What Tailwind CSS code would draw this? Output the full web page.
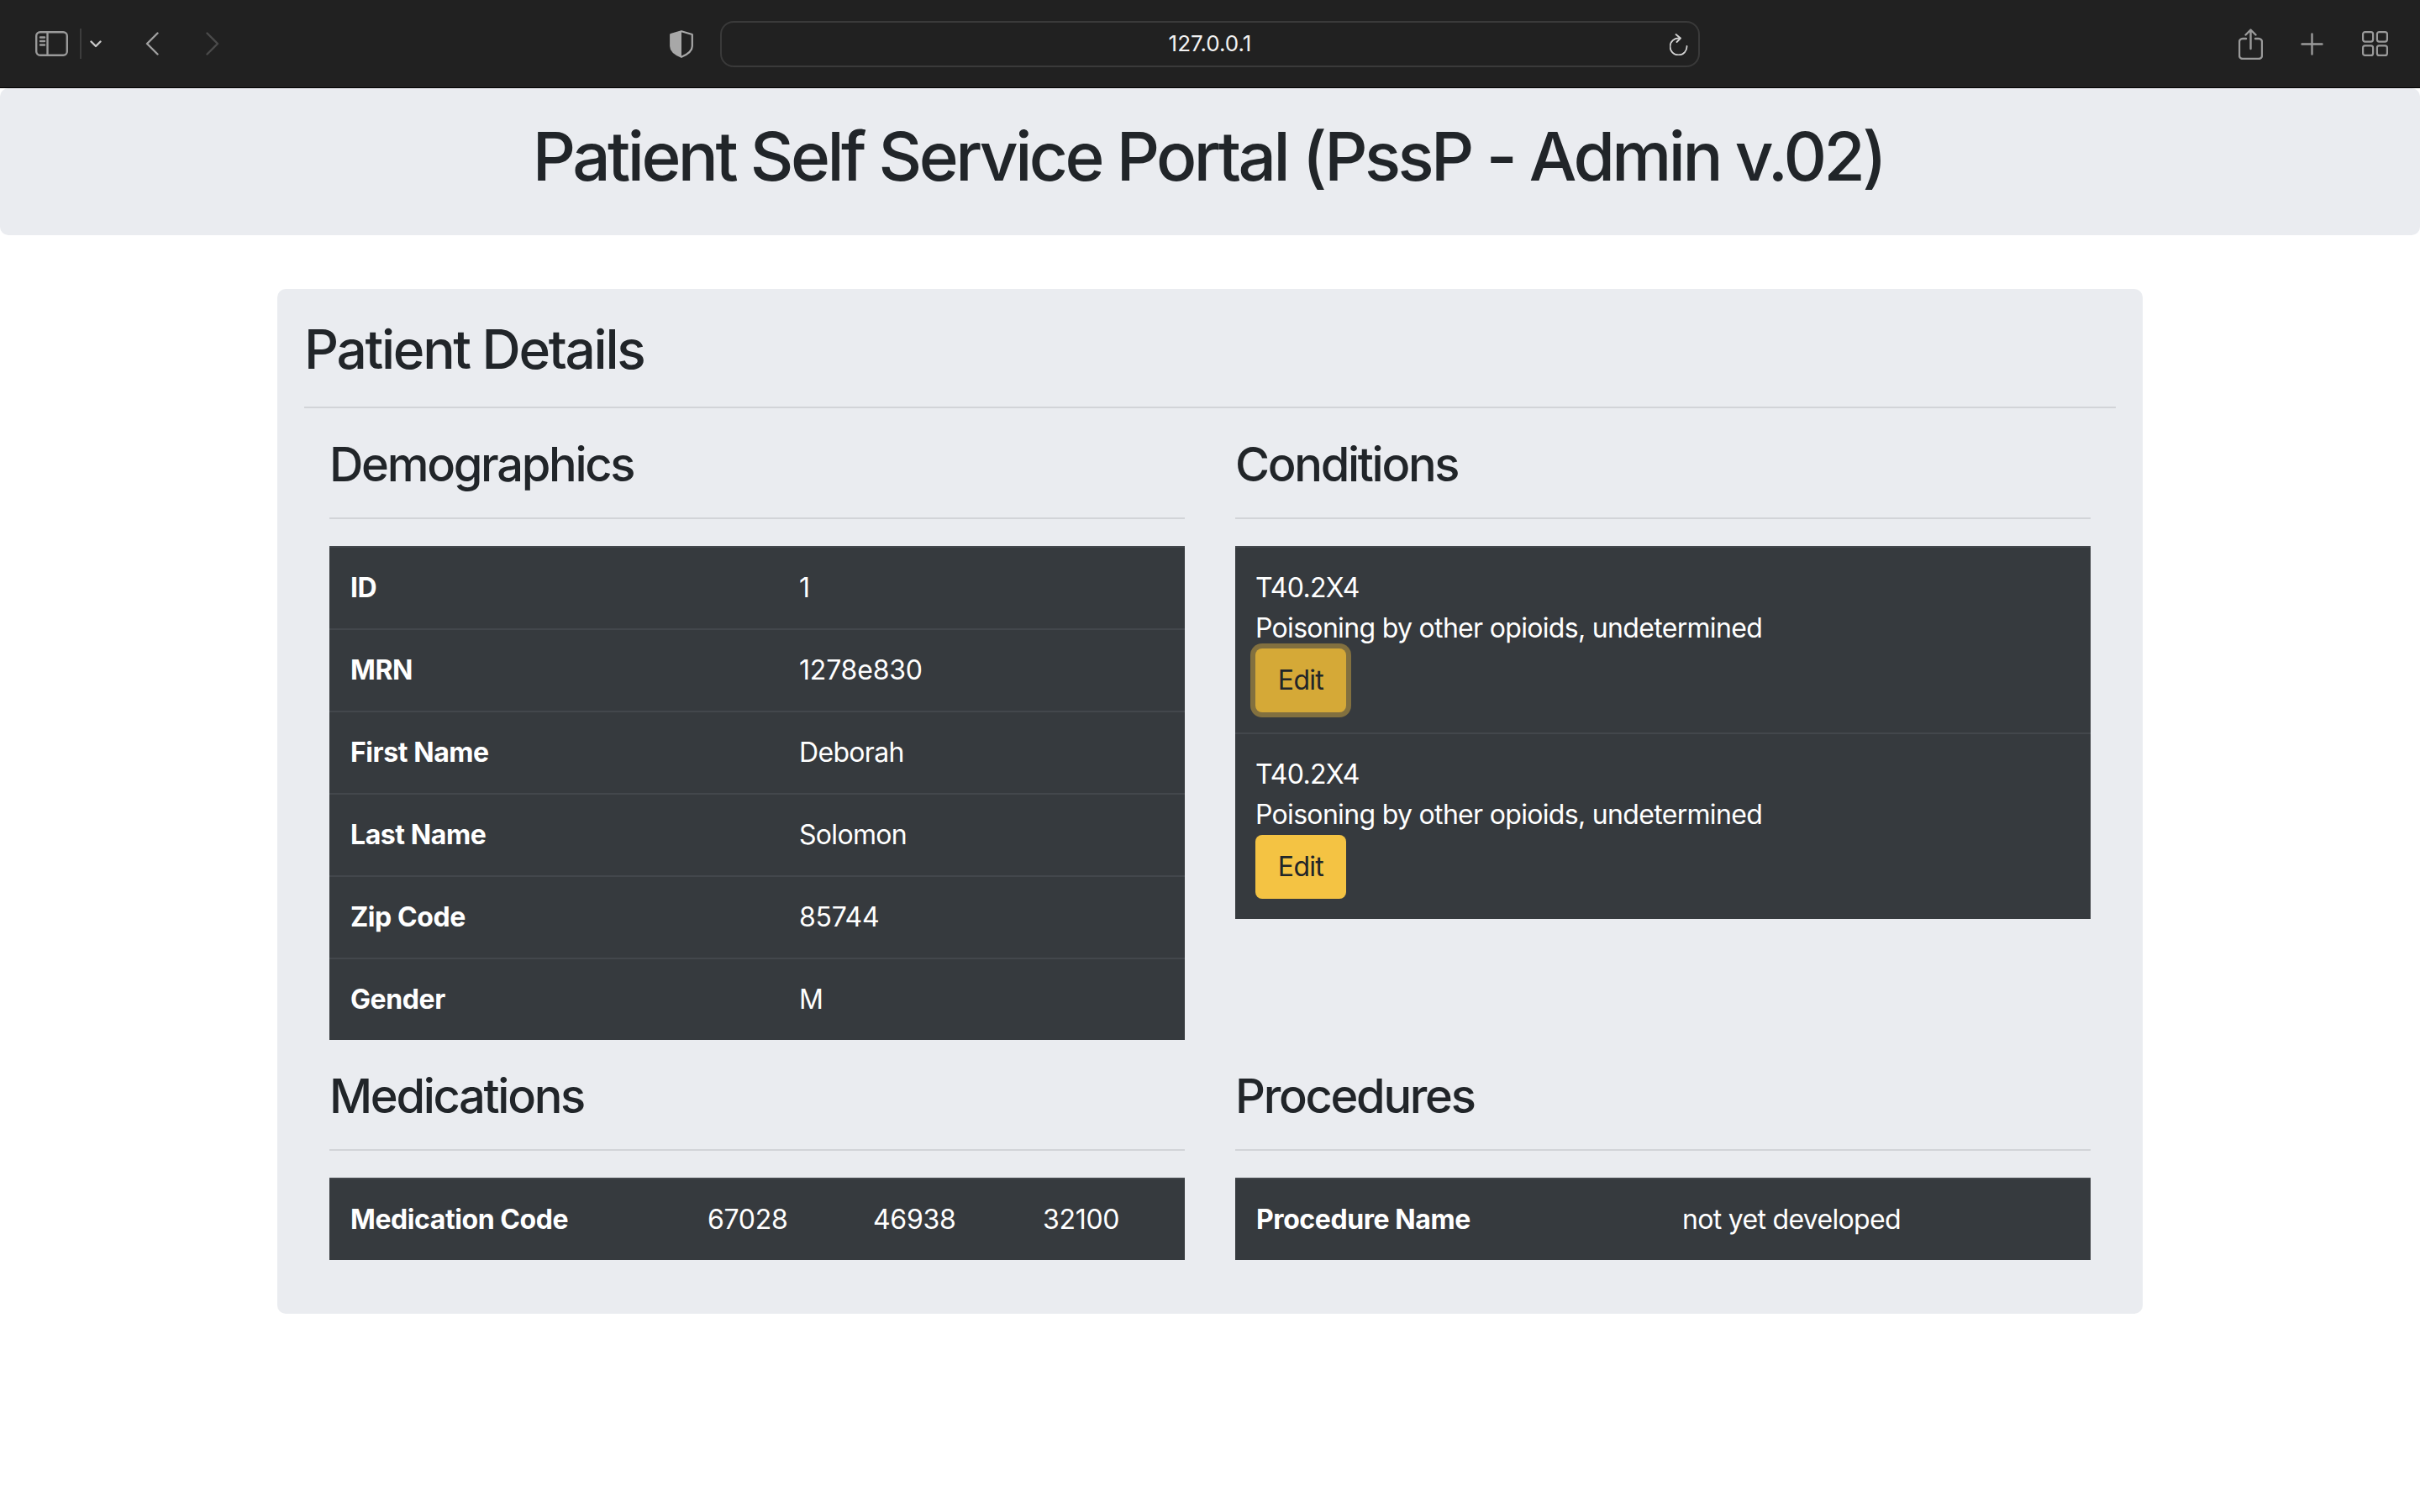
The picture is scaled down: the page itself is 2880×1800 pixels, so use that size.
<!DOCTYPE html>
<html lang="en">
<head>
    <meta charset="UTF-8">
    <title>Patient Self Service Portal</title>
    <script src="https://cdn.jsdelivr.net/npm/@tailwindcss/browser@4"></script>
</head>
<body class="bg-white font-[Inter,sans-serif] text-[32px] leading-[48px] text-[#212529] min-h-screen">

    <!-- Browser toolbar -->
    <div class="flex items-center h-[105px] pl-[42px] bg-[#212121] border-b border-black">
        <svg class="w-[39px] h-[30px] text-[#9a9a9a]" viewBox="0 0 39 30" fill="none" stroke="currentColor" stroke-width="2.4">
            <rect x="1.2" y="1.2" width="36.6" height="27.6" rx="4.5"/>
            <path d="M14.5 1.2v27.6M6 7.5h5M6 12h5M6 16.5h5" stroke-linecap="round"/>
        </svg>
        <div class="ml-[14px] w-[2px] h-[36px] bg-[#3d3d3d]"></div>
        <svg class="ml-[10px] w-[14px] h-[9px] text-[#c8c8c8]" viewBox="0 0 14 9" fill="none" stroke="currentColor" stroke-width="2.4" stroke-linecap="round" stroke-linejoin="round"><path d="M1.5 1.5 7 7l5.5-5.5"/></svg>
        <svg class="ml-[52px] w-[16px] h-[28px] text-[#a0a0a0]" viewBox="0 0 16 28" fill="none" stroke="currentColor" stroke-width="2.4" stroke-linecap="round" stroke-linejoin="round"><path d="M14.5 1.5 2 14l12.5 12.5"/></svg>
        <svg class="ml-[56px] w-[16px] h-[28px] text-[#4a4a4a]" viewBox="0 0 16 28" fill="none" stroke="currentColor" stroke-width="2.4" stroke-linecap="round" stroke-linejoin="round"><path d="M1.5 1.5 14 14 1.5 26.5"/></svg>
        <svg class="ml-[536px] w-[28px] h-[33px] text-[#a8a8a8]" viewBox="0 0 28 33" fill="none">
            <path d="M14 1.2 26.8 5v14c0 5.5-5 9.5-12.8 12.8C6.200 28.500 1.200 24.500 1.200 19V5z" stroke="currentColor" stroke-width="2.2" stroke-linejoin="round"/>
            <path d="M14 1.2V31.800C6.200 28.500 1.200 24.500 1.200 19V5z" fill="currentColor"/>
        </svg>
        <div class="relative ml-[32px] w-[1166px] h-[55px] flex items-center justify-center rounded-[16px] border-2 border-[#3a3a3a]">
            <span class="text-[26px] leading-[32px] text-[#f2f2f2]">127.0.0.1</span>
            <svg class="absolute right-[12px] top-[13px] w-[22px] h-[26px] text-[#d4d4d4]" viewBox="0 0 22 26" fill="none" stroke="currentColor" stroke-width="1.8" stroke-linecap="round" stroke-linejoin="round">
                <path d="M11 5.500A10 10 0 1 0 20.500 15"/>
                <path d="M7.500 1 13 5.500 8.500 10"/>
            </svg>
        </div>
        <svg class="ml-[641px] w-[29px] h-[37px] text-[#9a9a9a]" viewBox="0 0 29 37" fill="none" stroke="currentColor" stroke-width="2.4" stroke-linecap="round" stroke-linejoin="round">
            <path d="M9 12H5a4 4 0 0 0-4 4v16a4 4 0 0 0 4 4h19a4 4 0 0 0 4-4V16a4 4 0 0 0-4-4h-4"/>
            <path d="M14.500 24V2M8.500 7.500 14.500 1.500l6 6"/>
        </svg>
        <svg class="ml-[45px] w-[27px] h-[27px] text-[#9a9a9a]" viewBox="0 0 27 27" fill="none" stroke="currentColor" stroke-width="2.4" stroke-linecap="round"><path d="M13.500 1.500v24M1.500 13.500h24"/></svg>
        <svg class="ml-[46px] w-[31px] h-[30px] text-[#9a9a9a]" viewBox="0 0 31 30" fill="none" stroke="currentColor" stroke-width="2.2">
            <rect x="1.100" y="1.100" width="12" height="11.500" rx="2.500"/>
            <rect x="17.900" y="1.100" width="12" height="11.500" rx="2.500"/>
            <rect x="1.100" y="17.400" width="12" height="11.500" rx="2.500"/>
            <rect x="17.900" y="17.400" width="12" height="11.500" rx="2.500"/>
        </svg>
    </div>

    <!-- Page header -->
    <div class="h-[175px] pt-[33px] pr-[4px] bg-[#eaecf0] rounded-[10px] text-center">
        <h1 class="text-[80px] leading-[96px] font-medium tracking-[-3.55px]">Patient Self Service Portal (PssP - Admin v.02)</h1>
    </div>

    <!-- Patient details -->
    <div class="w-[2220px] mt-[64px] mx-auto pt-[33px] px-[32px] pb-[64px] bg-[#eaecf0] rounded-[10px]">
        <h2 class="text-[64px] leading-[77px] font-medium tracking-[-2.3px]">Patient Details</h2>
        <hr class="mt-[30px] border-t-2 border-[#d2d4d8]">

        <div class="grid grid-cols-2 gap-x-[60px] px-[30px]">
            <div>
                <h3 class="mt-[34px] text-[56px] leading-[67px] font-medium tracking-[-2.3px]">Demographics</h3>
                <hr class="mt-[29px] mb-[32px] border-t-2 border-[#d2d4d8]">
                <table class="table-fixed w-full bg-[#363a3e] text-white tracking-[-0.68px]">
                    <tbody>
                        <tr class="border-t-2 border-[#43474c]"><th class="w-[535px] py-[24px] pl-[25px] text-left font-bold tracking-[-0.42px]">ID</th><td class="p-[24px]">1</td></tr>
                        <tr class="border-t-2 border-[#43474c]"><th class="py-[24px] pl-[25px] text-left font-bold tracking-[-0.42px]">MRN</th><td class="p-[24px] tracking-[-0.2px]">1278e830</td></tr>
                        <tr class="border-t-2 border-[#43474c]"><th class="py-[24px] pl-[25px] text-left font-bold tracking-[-0.42px]">First Name</th><td class="p-[24px]">Deborah</td></tr>
                        <tr class="border-t-2 border-[#43474c]"><th class="py-[24px] pl-[25px] text-left font-bold tracking-[-0.42px]">Last Name</th><td class="p-[24px]">Solomon</td></tr>
                        <tr class="border-t-2 border-[#43474c]"><th class="py-[24px] pl-[25px] text-left font-bold tracking-[-0.42px]">Zip Code</th><td class="p-[24px] tracking-[-0.3px]">85744</td></tr>
                        <tr class="border-t-2 border-[#43474c]"><th class="py-[24px] pl-[25px] text-left font-bold tracking-[-0.42px]">Gender</th><td class="p-[24px]">M</td></tr>
                    </tbody>
                </table>
            </div>

            <div>
                <h3 class="mt-[34px] text-[56px] leading-[67px] font-medium tracking-[-2.3px]">Conditions</h3>
                <hr class="mt-[29px] mb-[32px] border-t-2 border-[#d2d4d8]">
                <div class="bg-[#363a3e] text-white tracking-[-0.68px]">
                    <div class="border-t-2 border-[#43474c] p-[24px]">
                        <div>T40.2X4</div>
                        <div>Poisoning by other opioids, undetermined</div>
                        <button class="block w-[108px] h-[76px] rounded-[8px] bg-[#d5a937] text-[#212529] ring-[6px] ring-[#82703f]">Edit</button>
                    </div>
                    <div class="border-t-2 border-[#43474c] p-[24px]">
                        <div>T40.2X4</div>
                        <div>Poisoning by other opioids, undetermined</div>
                        <button class="block w-[108px] h-[76px] rounded-[8px] bg-[#f4c343] text-[#212529]">Edit</button>
                    </div>
                </div>
            </div>

            <div>
                <h3 class="mt-[34px] text-[56px] leading-[67px] font-medium tracking-[-2.3px]">Medications</h3>
                <hr class="mt-[29px] mb-[32px] border-t-2 border-[#d2d4d8]">
                <table class="table-fixed w-full bg-[#363a3e] text-white tracking-[-0.3px]">
                    <tbody>
                        <tr class="border-t-2 border-[#43474c]">
                            <th class="w-[425px] py-[24px] pl-[25px] text-left font-bold tracking-[-0.42px]">Medication Code</th>
                            <td class="w-[198px] py-[24px] pl-[25px]">67028</td>
                            <td class="w-[202px] p-[24px]">46938</td>
                            <td class="p-[24px]">32100</td>
                        </tr>
                    </tbody>
                </table>
            </div>

            <div>
                <h3 class="mt-[34px] text-[56px] leading-[67px] font-medium tracking-[-2.3px]">Procedures</h3>
                <hr class="mt-[29px] mb-[32px] border-t-2 border-[#d2d4d8]">
                <table class="table-fixed w-full bg-[#363a3e] text-white tracking-[-0.68px]">
                    <tbody>
                        <tr class="border-t-2 border-[#43474c]">
                            <th class="w-[508px] py-[24px] pl-[25px] text-left font-bold tracking-[-0.42px]">Procedure Name</th>
                            <td class="p-[24px]">not yet developed</td>
                        </tr>
                    </tbody>
                </table>
            </div>
        </div>
    </div>

</body>
</html>
